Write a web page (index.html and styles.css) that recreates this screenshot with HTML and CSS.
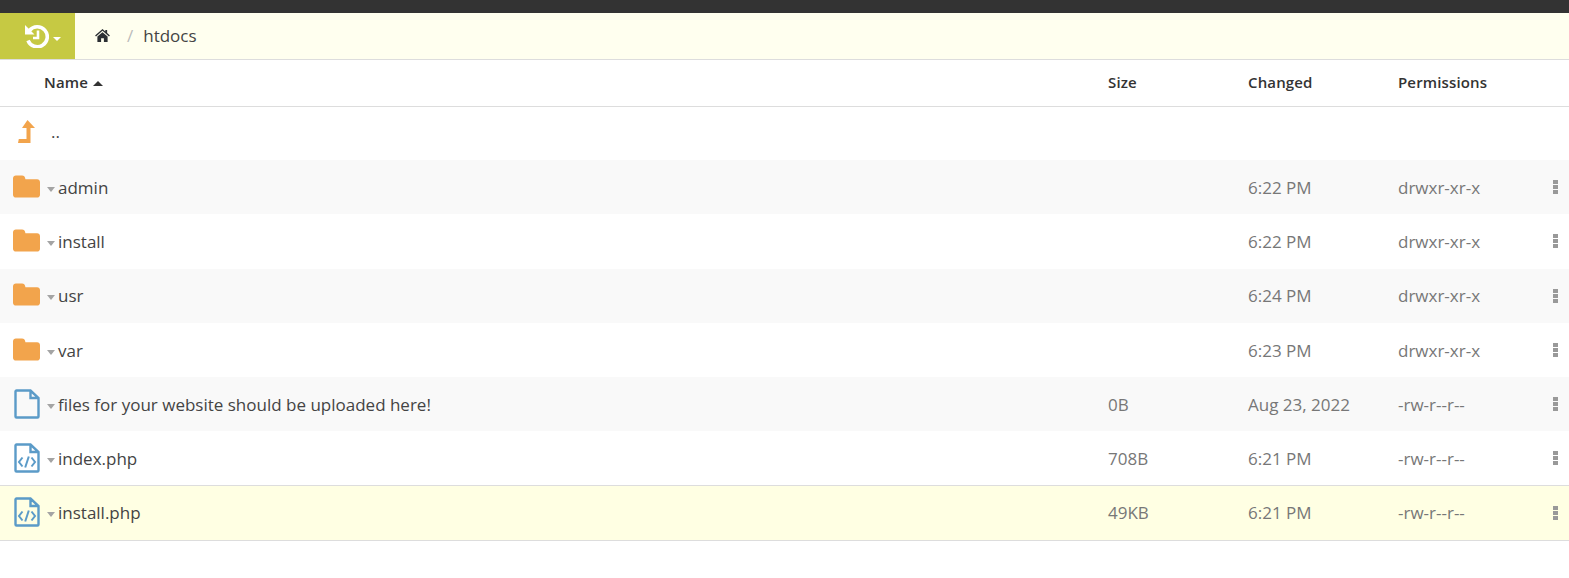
FILE: index.html

```html
<!DOCTYPE html>
<html lang="en">
<head>
<meta charset="utf-8"/>
<title>File Manager</title>
<link rel="stylesheet" href="styles.css">
</head>
<body>
<svg class="sprites" width="0" height="0">
  <symbol id="i-folder" viewBox="0 0 28 23"><path d="M3 0h6.500c1.500 0 2.500 .8 3 2.500l.4 1.500H25c1.700 0 3 1.300 3 3v13c0 1.700-1.300 3-3 3H3c-1.700 0-3-1.300-3-3V3c0-1.700 1.300-3 3-3z" fill="#f2a44c"/></symbol>
  <symbol id="i-file" viewBox="0 0 26 30"><path d="M2.500 1.500h14L24.500 9v18.500a1 1 0 0 1-1 1h-21a1 1 0 0 1-1-1v-25a1 1 0 0 1 1-1zM16.500 1.500V9h8" fill="none" stroke="#5b9bc8" stroke-width="2.400"/></symbol>
  <symbol id="i-code" viewBox="0 0 26 30"><path d="M2.500 1.500h14L24.500 9v18.500a1 1 0 0 1-1 1h-21a1 1 0 0 1-1-1v-25a1 1 0 0 1 1-1zM16.500 1.500V9h8" fill="none" stroke="#5b9bc8" stroke-width="2.400"/><path d="M8.500 14.500L5 19l3.500 4.500M17.500 14.500L21 19l-3.500 4.500M14.800 13.500L11.200 24.500" fill="none" stroke="#5b9bc8" stroke-width="2"/></symbol>
</svg>
<div class="topbar"></div>
<div class="crumbs">
  <button class="history">
    <svg class="history-icon" viewBox="0 0 24 24" width="24" height="24"><path d="M4.500 6.500A10 10 0 1 1 3 16.500" fill="none" stroke="#fff" stroke-width="3.600"/><path d="M0 1v9.500h9.500z" fill="#fff"/><path d="M13 6.500v7.500H8" fill="none" stroke="#fff" stroke-width="2.600"/></svg>
    <span class="caret caret-white"></span>
  </button>
  <svg class="home" viewBox="0 0 16 14" width="15" height="13"><path d="M8 0l3 2.600V1h2v3.300L16 7l-1 1-7-6-7 6-1-1zM8 3.400l5.500 4.700V14H9.500v-4h-3v4H2.500V8.100z" fill="#2b2f33"/></svg>
  <span class="sep">/</span>
  <span class="crumb">htdocs</span>
</div>
<table class="files">
  <thead>
    <tr>
      <th class="col-icon"></th>
      <th class="col-name">Name <span class="caret caret-up"></span></th>
      <th class="col-size">Size</th>
      <th class="col-date">Changed</th>
      <th class="col-perm">Permissions</th>
      <th class="col-menu"></th>
    </tr>
  </thead>
  <tbody>
    <tr class="parent">
      <td class="cell-icon"><svg class="up" viewBox="0 0 17 23" width="17" height="23"><path d="M9.500 0L17 8h-4.500v15H0l.8-4h7.700V8H4z" fill="#f2a44c"/></svg></td>
      <td class="parent-name">..</td>
      <td></td><td></td><td></td><td></td>
    </tr>
    <tr>
      <td class="cell-icon"><svg class="ico-folder"><use href="#i-folder"/></svg></td>
      <td><span class="caret caret-grey"></span>admin</td>
      <td></td><td>6:22 PM</td><td>drwxr-xr-x</td><td><span class="dots"></span></td>
    </tr>
    <tr>
      <td class="cell-icon"><svg class="ico-folder"><use href="#i-folder"/></svg></td>
      <td><span class="caret caret-grey"></span>install</td>
      <td></td><td>6:22 PM</td><td>drwxr-xr-x</td><td><span class="dots"></span></td>
    </tr>
    <tr>
      <td class="cell-icon"><svg class="ico-folder"><use href="#i-folder"/></svg></td>
      <td><span class="caret caret-grey"></span>usr</td>
      <td></td><td>6:24 PM</td><td>drwxr-xr-x</td><td><span class="dots"></span></td>
    </tr>
    <tr>
      <td class="cell-icon"><svg class="ico-folder"><use href="#i-folder"/></svg></td>
      <td><span class="caret caret-grey"></span>var</td>
      <td></td><td>6:23 PM</td><td>drwxr-xr-x</td><td><span class="dots"></span></td>
    </tr>
    <tr>
      <td class="cell-icon"><svg class="ico-file"><use href="#i-file"/></svg></td>
      <td><span class="caret caret-grey"></span>files for your website should be uploaded here!</td>
      <td>0B</td><td>Aug 23, 2022</td><td>-rw-r--r--</td><td><span class="dots"></span></td>
    </tr>
    <tr>
      <td class="cell-icon"><svg class="ico-file"><use href="#i-code"/></svg></td>
      <td><span class="caret caret-grey"></span>index.php</td>
      <td>708B</td><td>6:21 PM</td><td>-rw-r--r--</td><td><span class="dots"></span></td>
    </tr>
    <tr class="selected">
      <td class="cell-icon"><svg class="ico-file"><use href="#i-code"/></svg></td>
      <td><span class="caret caret-grey"></span>install.php</td>
      <td>49KB</td><td>6:21 PM</td><td>-rw-r--r--</td><td><span class="dots"></span></td>
    </tr>
  </tbody>
</table>
</body>
</html>
```

FILE: styles.css

```css
* {
  margin: 0;
  padding: 0;
  box-sizing: border-box;
}
body {
  font-family: "Open Sans", sans-serif;
  font-size: 17px;
  color: #3a3a3a;
  background: #fff;
}
.sprites {
  display: block;
  height: 0;
}
.topbar {
  height: 13px;
  background: #333;
}
.crumbs {
  display: flex;
  align-items: center;
  height: 47px;
  background: #ffffef;
  border-bottom: 1px solid #ddd;
}
.history {
  display: flex;
  align-items: center;
  gap: 4px;
  width: 75px;
  height: 46px;
  padding-left: 25px;
  border: none;
  background: #c6c943;
}
.history-icon {
  display: block;
}
.caret-white {
  margin-top: 5px;
}
.home {
  margin: 0 0 1px 20px;
}
.sep {
  margin: 0 0 2px 17px;
  color: #bbb;
}
.crumb {
  margin: 0 0 2px 10px;
  color: #444;
}
.files {
  width: 100%;
  border-collapse: collapse;
  table-layout: fixed;
}
.files th {
  height: 46px;
  padding-bottom: 2px;
  font-size: 15px;
  font-weight: 600;
  letter-spacing: .15px;
  text-align: left;
  color: #333;
  border-bottom: 1px solid #ddd;
}
.col-icon { width: 44px; }
.col-size { width: 140px; }
.col-date { width: 150px; }
.col-perm { width: 141px; }
.col-menu { width: 30px; }
.files td {
  height: 54.3px;
  color: #777;
}
.files td:nth-child(2) {
  color: #444;
}
.files .parent td {
  height: 54px;
}
.files tbody tr:nth-child(even) {
  background: #f9f9f9;
}
.files tbody tr.selected {
  background: #ffffe3;
}
.selected td {
  border-top: 1px solid #ddd;
  border-bottom: 1px solid #ddd;
}
.cell-icon {
  padding-left: 13px;
}
.cell-icon svg {
  display: block;
}
.files .parent-name {
  padding: 0 0 3px 7px;
}
.up {
  margin: -4px 0 0 5px;
}
.ico-folder {
  width: 27px;
  height: 23px;
  margin-top: -2px;
}
.ico-file {
  width: 26px;
  height: 30px;
  margin: -1px 0 0 1px;
}
.caret {
  display: inline-block;
  border-left: 4px solid transparent;
  border-right: 4px solid transparent;
}
.caret-white {
  border-left-width: 4px;
  border-right-width: 4px;
  border-top: 4px solid #fff;
}
.caret-up {
  vertical-align: 2px;
  margin-left: 1px;
  border-left-width: 5px;
  border-right-width: 5px;
  border-bottom: 5px solid #333;
}
.caret-grey {
  margin-left: 2.500px;
  margin-right: 3.500px;
  vertical-align: 2px;
  border-left-width: 4.500px;
  border-right-width: 4.500px;
  border-top: 5px solid #a4a4a4;
}
.dots {
  display: block;
  width: 5px;
  height: 14px;
  margin-left: 14px;
  background: repeating-linear-gradient(#999 0, #999 4px, transparent 4px, transparent 5px);
}
```
